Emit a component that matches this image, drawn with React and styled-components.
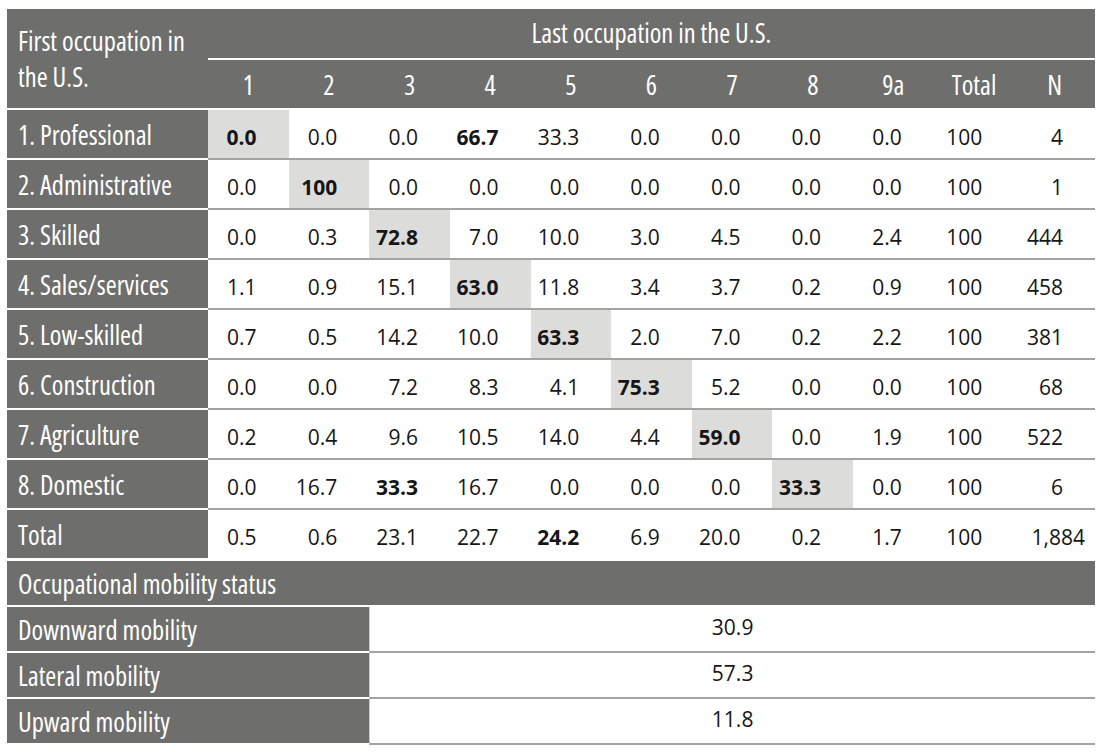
import React from "react";
import styled, { createGlobalStyle, css } from "styled-components";

const DARK = "#6e6e6c";
const HILITE = "#dcdcda";
const RULE = "#a3a3a3";
const NUMFONT = '"Open Sans", "Noto Sans", sans-serif';
const COLS = "201px repeat(11, 1fr)";

const narrowText = css`
  font-family: "Open Sans", "Noto Sans", sans-serif;
  font-stretch: 75%;
  font-size: 26.5px;
  color: #fff;
  white-space: nowrap;
`;

const GlobalStyle = createGlobalStyle`
  html, body { margin: 0; padding: 0; background: #fff; }
  body { font-family: ${NUMFONT}; }
`;

const Page = styled.div`
  width: 1088px;
  padding: 9px 0 0 7px;
`;

const Header = styled.div`
  display: grid;
  grid-template-columns: ${COLS};
  grid-template-rows: 51px 48px;
  background: ${DARK};
  margin-bottom: 2px;
  ${narrowText};
`;

const Corner = styled.div`
  grid-row: 1 / 3;
  grid-column: 1;
  padding: 14px 0 0 11px;
  line-height: 36px;
`;

const Title = styled.div`
  grid-row: 1;
  grid-column: 2 / -1;
  border-bottom: 2px solid #fff;
  text-align: center;
  padding-top: 2px;
  line-height: 44px;
`;

const HeadNum = styled.div`
  grid-row: 2;
  text-align: center;
  padding-top: 3px;
  line-height: 44px;
`;

const Row = styled.div`
  display: grid;
  grid-template-columns: ${COLS};
  height: 50px;
`;

const Label = styled.div`
  ${narrowText};
  background: ${DARK};
  border-bottom: 2px solid #fff;
  padding: 3px 0 0 11px;
  line-height: 44px;
`;

const Cell = styled.div`
  background: ${(p) => (p.$hl ? HILITE : "#fff")};
  border-bottom: 2px solid ${(p) => (p.$last ? "#fff" : RULE)};
  font-family: ${NUMFONT};
  font-size: 21px;
  font-weight: ${(p) => (p.$bold ? 700 : 400)};
  color: #161616;
  text-align: right;
  padding: 6px ${(p) => (p.$wide ? 10 : 32)}px 0 0;
  line-height: 42px;
  white-space: nowrap;
`;

const Section = styled.div`
  ${narrowText};
  background: ${DARK};
  border-bottom: 2px solid #fff;
  margin-top: 1px;
  padding: 2px 0 0 11px;
  line-height: 42px;
  height: 42px;
`;

const MobRow = styled.div`
  display: grid;
  grid-template-columns: ${COLS};
  height: 46px;
`;

const MobLabel = styled.div`
  ${narrowText};
  grid-column: 1 / 4;
  background: ${DARK};
  border-bottom: 2px solid #fff;
  padding: 2px 0 0 11px;
  line-height: 42px;
`;

const MobValue = styled.div`
  grid-column: 4 / -1;
  border-left: 1px solid #c9c9c9;
  border-bottom: 2px solid ${RULE};
  font-family: ${NUMFONT};
  font-size: 21px;
  color: #161616;
  text-align: center;
  line-height: 40px;
`;

const heads = ["1", "2", "3", "4", "5", "6", "7", "8", "9a", "Total", "N"];

const rows = [
  { label: "1. Professional", v: ["0.0", "0.0", "0.0", "66.7", "33.3", "0.0", "0.0", "0.0", "0.0", "100", "4"], bold: [0, 3], hl: 0 },
  { label: "2. Administrative", v: ["0.0", "100", "0.0", "0.0", "0.0", "0.0", "0.0", "0.0", "0.0", "100", "1"], bold: [1], hl: 1 },
  { label: "3. Skilled", v: ["0.0", "0.3", "72.8", "7.0", "10.0", "3.0", "4.5", "0.0", "2.4", "100", "444"], bold: [2], hl: 2 },
  { label: "4. Sales/services", v: ["1.1", "0.9", "15.1", "63.0", "11.8", "3.4", "3.7", "0.2", "0.9", "100", "458"], bold: [3], hl: 3 },
  { label: "5. Low-skilled", v: ["0.7", "0.5", "14.2", "10.0", "63.3", "2.0", "7.0", "0.2", "2.2", "100", "381"], bold: [4], hl: 4 },
  { label: "6. Construction", v: ["0.0", "0.0", "7.2", "8.3", "4.1", "75.3", "5.2", "0.0", "0.0", "100", "68"], bold: [5], hl: 5 },
  { label: "7. Agriculture", v: ["0.2", "0.4", "9.6", "10.5", "14.0", "4.4", "59.0", "0.0", "1.9", "100", "522"], bold: [6], hl: 6 },
  { label: "8. Domestic", v: ["0.0", "16.7", "33.3", "16.7", "0.0", "0.0", "0.0", "33.3", "0.0", "100", "6"], bold: [2, 7], hl: 7 },
  { label: "Total", v: ["0.5", "0.6", "23.1", "22.7", "24.2", "6.9", "20.0", "0.2", "1.7", "100", "1,884"], bold: [4], hl: -1, last: true },
];

const mobility = [
  ["Downward mobility", "30.9"],
  ["Lateral mobility", "57.3"],
  ["Upward mobility", "11.8"],
];

export default function App() {
  return (
    <>
      <GlobalStyle />
      <Page>
        <Header>
          <Corner>
            First occupation in
            <br />
            the U.S.
          </Corner>
          <Title>Last occupation in the U.S.</Title>
          {heads.map((h) => (
            <HeadNum key={h}>{h}</HeadNum>
          ))}
        </Header>
        {rows.map((r) => (
          <Row key={r.label}>
            <Label>{r.label}</Label>
            {r.v.map((val, i) => (
              <Cell
                key={i}
                $hl={r.hl === i}
                $bold={r.bold.includes(i)}
                $last={r.last}
                $wide={val.length > 4}
              >
                {val}
              </Cell>
            ))}
          </Row>
        ))}
        <Section>Occupational mobility status</Section>
        {mobility.map(([l, v]) => (
          <MobRow key={l}>
            <MobLabel>{l}</MobLabel>
            <MobValue>{v}</MobValue>
          </MobRow>
        ))}
      </Page>
    </>
  );
}
